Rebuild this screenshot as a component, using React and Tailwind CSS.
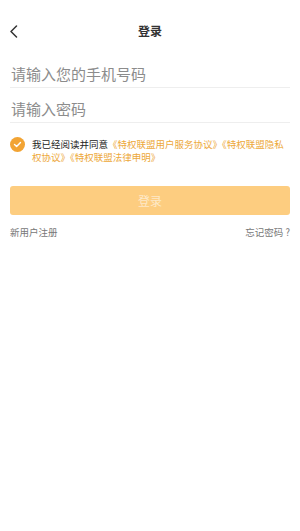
import React from 'react';

const font = { fontFamily: '"Noto Sans CJK SC", "Noto Sans", sans-serif' };

export default function App() {
  return (
    <div className="w-[300px] h-[531px] bg-white" style={font}>
      {/* Header */}
      <div className="relative h-[62px] flex items-center justify-center">
        <svg className="absolute left-[9px] top-[25px]" width="10" height="13" viewBox="0 0 10 13">
          <path d="M7.5 1 L2 6.5 L7.5 12" fill="none" stroke="#333" strokeWidth="1.5" strokeLinecap="round" strokeLinejoin="round" />
        </svg>
        <span className="text-[12px] font-bold text-[#333] leading-none">登录</span>
      </div>

      <div className="px-[10px]">
        {/* Phone */}
        <div className="pt-[2px] pb-[3px] border-b border-[#eeeeee]">
          <input
            className="block w-full h-[20px] text-[15px] leading-[20px] outline-none placeholder-[#8c8c8c] pl-[1px]"
            placeholder="请输入您的手机号码"
          />
        </div>
        {/* Password */}
        <div className="pt-[11px] pb-[3px] border-b border-[#eeeeee]">
          <input
            type="password"
            className="block w-full h-[20px] text-[15px] leading-[20px] outline-none placeholder-[#8c8c8c] pl-[1px]"
            placeholder="请输入密码"
          />
        </div>

        {/* Agreement */}
        <div className="mt-[14px] flex items-start gap-[7px]">
          <span className="w-[15px] h-[15px] shrink-0 rounded-full bg-[#f2a434] flex items-center justify-center">
            <svg width="9" height="9" viewBox="0 0 9 9">
              <path d="M1.5 4.6 L3.6 6.6 L7.5 2.4" fill="none" stroke="white" strokeWidth="1.4" strokeLinecap="round" strokeLinejoin="round" />
            </svg>
          </span>
          <p className="text-[9.5px] leading-[13px] text-[#222] pt-[1px]">
            我已经阅读并同意<span className="text-[#eda83a]">《特权联盟用户服务协议》《特权联盟隐私权协议》《特权联盟法律申明》</span>
          </p>
        </div>

        {/* Button */}
        <button className="mt-[22px] w-full h-[29px] rounded-[3px] bg-[#fdcd80] text-[#fde9c8] text-[12px]">
          登录
        </button>

        {/* Links */}
        <div className="mt-[10px] flex justify-between text-[9.5px] leading-[14px] text-[#777]">
          <span>新用户注册</span>
          <span>忘记密码 ?</span>
        </div>
      </div>
    </div>
  );
}
